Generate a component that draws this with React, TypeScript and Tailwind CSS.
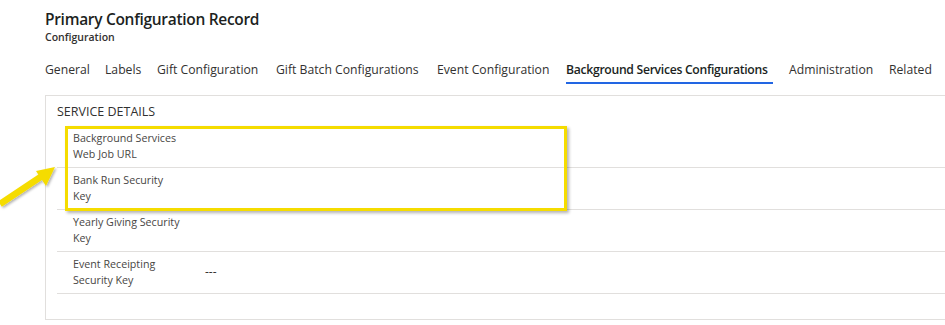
import React from "react";

const tabs = [
  { label: "General", active: false, cls: "w-[44px] mr-[16px]" },
  { label: "Labels", active: false, cls: "w-[36px] mr-[16px]" },
  { label: "Gift Configuration", active: false, cls: "w-[100px] mr-[19px]" },
  { label: "Gift Batch Configurations", active: false, cls: "w-[140px] mr-[21px]" },
  { label: "Event Configuration", active: false, cls: "w-[110px] mr-[19px]" },
  { label: "Background Services Configurations", active: true, cls: "w-[207px] mr-[16px]" },
  { label: "Administration", active: false, cls: "w-[81px] mr-[19px]" },
  { label: "Related", active: false, cls: "w-[42px]" },
];

const rows = [
  { l1: "Background Services", l2: "Web Job URL", value: "" },
  { l1: "Bank Run Security", l2: "Key", value: "" },
  { l1: "Yearly Giving Security", l2: "Key", value: "" },
  { l1: "Event Receipting", l2: "Security Key", value: "---" },
];

export default function App() {
  return (
    <div
      className="relative w-[945px] h-[325px] overflow-hidden bg-white text-[#323130]"
      style={{ fontFamily: '"Open Sans", "Noto Sans", Arial, sans-serif' }}
    >
      <div className="pl-[45px] pt-[8px]">
        <div className="text-[15.5px] font-semibold leading-[22px] text-[#201f1e] tracking-[-0.3px]">
          Primary Configuration Record
        </div>
        <div className="text-[10.5px] font-semibold leading-[14px] text-[#323130]">
          Configuration
        </div>
      </div>

      <div className="flex pl-[45px] mt-[16px] h-[24px] items-start">
        {tabs.map((t, i) => (
          <div
            key={i}
            className={`relative h-[24px] text-[12.2px] leading-[20px] whitespace-nowrap ${t.cls} ${
              t.active ? "font-semibold text-[#201f1e] tracking-[-0.3px]" : "text-[#323130]"
            }`}
          >
            {t.label}
            {t.active && (
              <div className="absolute left-0 right-0 bottom-0 h-[2px] bg-[#2266e3]" />
            )}
          </div>
        ))}
      </div>

      <div className="ml-[45px] mt-[11px] w-[920px] h-[225px] border border-[#e1dfdd]">
        <div className="pl-[11px] pt-[7px] text-[12.5px] leading-[18px] text-[#323130]">
          SERVICE DETAILS
        </div>
        <div className="ml-[11px] mt-[5px]">
          {rows.map((r, i) => (
            <div
              key={i}
              className="flex h-[42px] border-b border-[#e1dfdd] pl-[16px] pt-[4px]"
            >
              <div className="w-[132px] text-[10.7px] leading-[16px] text-[#484644]">
                <div>{r.l1}</div>
                <div>{r.l2}</div>
              </div>
              <div className="flex items-center h-[32px] text-[12px] text-[#323130]">
                {r.value}
              </div>
            </div>
          ))}
        </div>
      </div>

      {/* annotation: highlight box */}
      <div className="absolute left-[65px] top-[126px] w-[502px] h-[85px] border-[3px] border-[#f5dc00] shadow-[2px_2px_3px_rgba(0,0,0,0.3)]" />

      {/* annotation: arrow */}
      <svg
        className="absolute left-0 top-[158px]"
        width="70"
        height="55"
        viewBox="0 0 70 55"
      >
        <defs>
          <filter id="sh" x="-20%" y="-20%" width="140%" height="140%">
            <feDropShadow dx="1.5" dy="1.5" stdDeviation="1" floodColor="#000" floodOpacity="0.3" />
          </filter>
        </defs>
        <g filter="url(#sh)">
          <line x1="0" y1="46" x2="42" y2="18" stroke="#f5dc00" strokeWidth="6.5" strokeLinecap="butt" />
          <polygon points="55,9 36,13 46,28" fill="#f5dc00" />
        </g>
      </svg>
    </div>
  );
}
